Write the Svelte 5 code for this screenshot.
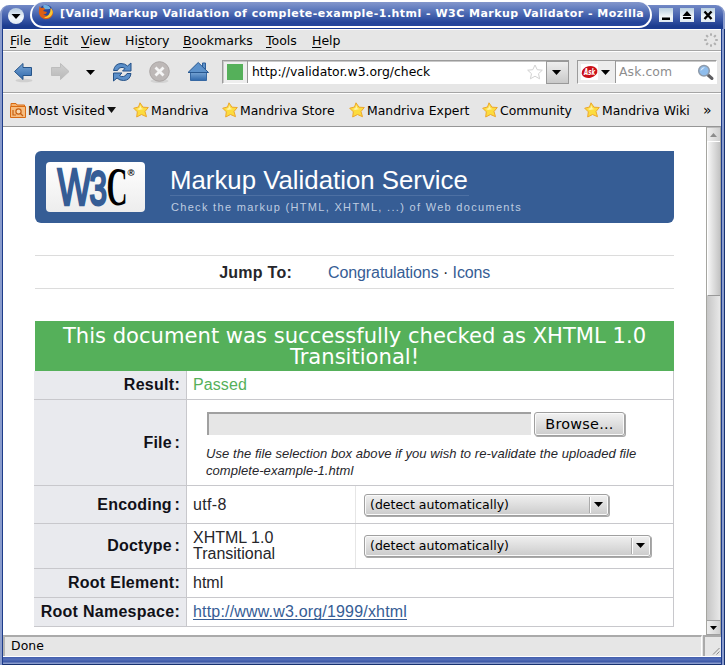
<script>
  const menus = [
    { a: '', k: 'F', b: 'ile', w: 34 },
    { a: '', k: 'E', b: 'dit', w: 37 },
    { a: '', k: 'V', b: 'iew', w: 44 },
    { a: 'Hi', k: 's', b: 'tory', w: 58 },
    { a: '', k: 'B', b: 'ookmarks', w: 83 },
    { a: '', k: 'T', b: 'ools', w: 46 },
    { a: '', k: 'H', b: 'elp', w: 40 }
  ];
  const bookmarks = [
    { t: 'Mandriva', w: 89 },
    { t: 'Mandriva Store', w: 127 },
    { t: 'Mandriva Expert', w: 133 },
    { t: 'Community', w: 102 },
    { t: 'Mandriva Wiki', w: 118 }
  ];
  const spokes = [0, 45, 90, 135, 180, 225, 270, 315];
</script>

{#snippet caret(w, h, fill)}
  <svg class="caret" width={w} height={h} viewBox="0 0 10 6" preserveAspectRatio="none"><path d="M0 0H10L5 6Z" fill={fill} /></svg>
{/snippet}

<div class="window">
  <header class="titlebar">
    <div class="frame"></div>
    <div class="orb"><svg width="16" height="16" viewBox="0 0 16 16"><path d="M3.500 6H12.500L8 11Z" /></svg></div>
    <div class="tab">
      <svg class="fox" width="16" height="16" viewBox="0 0 16 16">
        <circle cx="8" cy="7.600" r="6.800" fill="#27479c" />
        <path d="M5 1.500C9 .3 12 2 12.500 5C10 4.500 9 6 6 5Z" fill="#6fb0e0" />
        <path d="M1.500 2Q2 4 4 4Q6 3 7 5L5 7L9 8Q8 11 5 10Q8 13 11 11Q14 9 12 4Q17 8 14 12Q11 16 6 15Q1 13 .8 8Z" fill="#dd5f14" />
        <path d="M13 4Q16.500 8 13 12Q10 15 6 13.500Q12 12.500 13 4Z" fill="#f9c935" />
      </svg>
      <span>[Valid] Markup Validation of complete-example-1.html - W3C Markup Validator - Mozilla</span>
    </div>
    <div class="wbtns">
      <div class="wb"><svg width="14" height="14"><path d="M3 9.500H11V12H3Z" /></svg></div>
      <div class="wb"><svg width="14" height="14"><path d="M7 3L11.500 8H2.500ZM3 9H11V11H3Z" /></svg></div>
      <div class="wb"><svg width="14" height="14"><path d="M3.500 3.500L10.500 11M10.500 3.500L3.500 11" stroke="#000" stroke-width="2.400" /></svg></div>
    </div>
  </header>

  <div class="body">
    <nav class="menubar">
      {#each menus as m}<span style="width:{m.w}px">{m.a}<u>{m.k}</u>{m.b}</span>{/each}
      <svg class="throbber" width="14" height="14" viewBox="-7 -7 14 14">
        {#each spokes as s}<rect x="-1" y="-6.800" width="2" height="2.600" rx=".5" fill="#b0b0b0" transform="rotate({s})" />{/each}
      </svg>
    </nav>

    <div class="toolbar">
      <svg class="tools" width="210" height="40" viewBox="0 0 210 40">
        <defs>
          <linearGradient id="bl" x1="0" y1="0" x2="0" y2="1"><stop offset="0" stop-color="#7aa7d6" /><stop offset="1" stop-color="#2f68ab" /></linearGradient>
          <linearGradient id="gr" x1="0" y1="0" x2="0" y2="1"><stop offset="0" stop-color="#cfcfcf" /><stop offset="1" stop-color="#b9b9b9" /></linearGradient>
        </defs>
        <ellipse cx="20" cy="28.500" rx="8.500" ry="1.800" fill="#cfcfcf" />
        <path d="M10.500 19.500L19 11.500V15.500H27.500V23.500H19V27.500Z" fill="url(#bl)" stroke="#265489" />
        <path d="M65 19.500L56.500 11.500V15.500H47.500V23.500H56.500V27.500Z" fill="url(#gr)" stroke="#bdbdbd" />
        <path d="M82 18H91L86.500 23Z" fill="#000" />
        <path d="M109.500 18.500Q111 11.500 117 11.500Q121 11.500 123.500 14L127 11V19H118.500L121 16.500Q119 15 117 15.500Q114.500 15.500 113.500 18.500Z" fill="#5b8fc9" stroke="#245187" />
        <path d="M127 21.500Q126 28.500 119.500 28.500Q115.500 28.500 113 26L109.500 29V21H118L115.500 23.500Q117 25 119.500 24.500Q121.500 24.500 123 21.500Z" fill="#5b8fc9" stroke="#245187" />
        <ellipse cx="155.500" cy="29" rx="9" ry="2" fill="#d3d3d3" />
        <circle cx="155.500" cy="19.500" r="9.800" fill="#bdb8b7" stroke="#aaa5a4" />
        <path d="M151.500 15.500L159.500 23.500M159.500 15.500L151.500 23.500" stroke="#f5f5f5" stroke-width="2.800" />
        <path d="M186.500 20V28.500H202.500V20" fill="url(#bl)" stroke="#3668a3" />
        <path d="M198.500 11H201.500V17H198.500Z" fill="#5f92c8" stroke="#2d5f9b" />
        <path d="M184 20.500L194.200 10.500L204.500 20.500Z" fill="#5d92cb" stroke="#285890" />
      </svg>
      <div class="url">
        <div class="site"><i></i></div>
        <span class="addr">http://validator.w3.org/check</span>
        <svg class="fav" width="16" height="16" viewBox="0 0 16 16"><path d="M8 1L10.200 5.700L15.300 6.200L11.500 9.700L12.600 14.800L8 12.200L3.400 14.800L4.500 9.700L.7 6.200L5.800 5.700Z" fill="#fff" stroke="#d2d2d2" /></svg>
        <div class="drop">{@render caret(9, 5, '#000')}</div>
      </div>
      <div class="search">
        <div class="engine">
          <svg width="17" height="16" viewBox="0 0 17 16"><rect width="17" height="16" fill="#fff" /><ellipse cx="8.500" cy="8" rx="8" ry="5.800" fill="#cb1019" transform="rotate(-12 8.500 8)" /><text x="3" y="11" font-family="DejaVu Sans" font-size="8" font-weight="bold" font-style="italic" textLength="11" lengthAdjust="spacingAndGlyphs" fill="#fff">Ask</text></svg>
          {@render caret(9, 5, '#000')}
        </div>
        <span class="ph">Ask.com</span>
        <svg class="mag" width="17" height="17" viewBox="0 0 17 17"><path d="M11 11L15 14.500" stroke="#5e5e62" stroke-width="3" stroke-linecap="round" /><circle cx="7" cy="6.700" r="5.300" fill="#8fbdec" stroke="#8d9aaa" stroke-width="1.500" /><path d="M3.500 7Q4 3.500 8 3.200Q6 5 3.500 7" fill="#dbebfb" /></svg>
      </div>
    </div>

    <div class="bookmarks">
      <div class="bm first">
        <svg width="16" height="16" viewBox="0 0 16 16"><path d="M1 4V1.500H6L7 3H14.500V5" fill="#f5b26d" stroke="#d96a12" /><path d="M.500 4.500H15.500V15.500H.500Z" fill="#f6bd80" stroke="#d96a12" /><circle cx="8.500" cy="9.500" r="2.600" fill="#f9d8b0" stroke="#c75f10" stroke-width="1.200" /><path d="M10.500 11.500L13 14M3 8V13H6" fill="none" stroke="#c75f10" stroke-width="1.200" /></svg>
        <span>Most Visited</span>{@render caret(9, 6, '#111')}
      </div>
      {#each bookmarks as b}
        <div class="bm" style="width:{b.w}px">
          <svg width="16" height="16" viewBox="0 0 16 16"><path d="M7 .8L10 5.200L15.300 5.500L12 9.500L13.500 14.700L8.500 12.500L3.700 15L4.300 9.800L.7 6.200L5.500 5Z" fill="#fcdc3e" stroke="#eda72c" stroke-linejoin="round" /><path d="M7 3L8.700 6.500L11 7L6 8L4 7L6.500 6Z" fill="#fff3a5" /></svg>
          <span>{b.t}</span>
        </div>
      {/each}
      <span class="more">»</span>
    </div>

    <div class="viewport">
      <main>
        <div class="banner">
          <div class="logo">
            <svg width="99" height="50" viewBox="0 0 99 50">
              <g font-family="Liberation Sans">
                <text transform="translate(11.500 43) scale(.7 1)" font-size="51" fill="#365d95" stroke="#365d95" stroke-width="2.400">W</text>
                <text transform="translate(43.500 42.500) scale(.64 1)" font-size="49" fill="#365d95" stroke="#365d95" stroke-width="2.800">3</text>
                <text transform="translate(60.500 43) scale(.54 1)" font-family="Liberation Serif" font-size="54" font-weight="bold" fill="#000">C</text>
                <text x="81.500" y="14" font-size="9.500" font-weight="bold">®</text>
              </g>
            </svg>
          </div>
          <div class="heads"><h1>Markup Validation Service</h1><p>Check the markup (HTML, XHTML, ...) of Web documents</p></div>
        </div>

        <div class="jump"><strong>Jump To:</strong><span><a>Congratulations</a> <b>·</b> <a>Icons</a></span></div>

        <h2>This document was successfully checked as XHTML 1.0<br />Transitional!</h2>
        <div class="grid">
          <div class="row" style="height:29px"><div class="th">Result:</div><div class="td pass">Passed</div></div>
          <div class="row" style="height:86px">
            <div class="th spaced">File :</div>
            <div class="filecell">
              <div class="pick"><div class="input"></div><div class="browse">Browse...</div></div>
              <em>Use the file selection box above if you wish to re-validate the uploaded file<br />complete-example-1.html</em>
            </div>
          </div>
          <div class="row" style="height:38px">
            <div class="th spaced">Encoding :</div><div class="td half utf">utf-8</div>
            <div class="select" style="width:245px"><span>(detect automatically)</span><div>{@render caret(9, 5, '#000')}</div></div>
          </div>
          <div class="row" style="height:45px">
            <div class="th spaced">Doctype :</div><div class="td half">XHTML 1.0<br />Transitional</div>
            <div class="select" style="width:287px"><span>(detect automatically)</span><div>{@render caret(9, 5, '#000')}</div></div>
          </div>
          <div class="row" style="height:29px"><div class="th">Root Element:</div><div class="td">html</div></div>
          <div class="row" style="height:29px"><div class="th">Root Namespace:</div><div class="td"><a class="ns">http://www.w3.org/1999/xhtml</a></div></div>
        </div>
      </main>
      <aside class="scroll">
        <div class="sb up"><svg width="7" height="4"><path d="M3.500 0L7 4H0Z" fill="#8c8c8c" /></svg></div>
        <div class="thumb"></div>
        <div class="trough"></div>
        <div class="sb down">{@render caret(7, 4, '#000')}</div>
      </aside>
    </div>

    <footer>
      <div class="status">Done</div>
      <div class="grip"><svg width="7" height="7"><path d="M0 6.500L6.500 0M3.500 6.500L6.500 3.500" stroke="#888" /></svg></div>
    </footer>
  </div>
</div>

<style>
  * { box-sizing: border-box; }
  :global(body) { margin: 0; background: #fff; }
  .window {
    width: 725px; height: 665px; overflow: hidden; display: flex; flex-direction: column;
    font: 12.4px/16px "DejaVu Sans", sans-serif; color: #000;
  }
  .window div, .window span, h1, h2, p { white-space: nowrap; }
  svg { display: block; flex: none; overflow: visible; }

  .titlebar { position: relative; height: 29px; flex: none; display: flex; padding-left: 8px; }
  .frame {
    position: absolute; left: 0; right: 0; top: 5px; bottom: 0; border-radius: 9px 9px 0 0;
    background: linear-gradient(#7289c6, #3d5aa9 55%, #1c3c8f 88%); border-left: 2px solid #8a9ccd; border-right: 2px solid #8a9ccd;
  }
  .orb {
    position: relative; width: 16px; height: 16px; margin-top: 8px; border-radius: 8px;
    background: linear-gradient(#b5c9df, #f4f8fc 60%, #dfe9f2);
  }
  .tab {
    position: relative; margin-left: 6px; width: 622px; height: 26px; margin-top: 2px;
    border: 2px solid #fff; border-top-width: 0; border-radius: 13px;
    background: linear-gradient(#8497cc, #6680c1 25%, #24459a 85%); display: flex; align-items: flex-start; padding: 3px 0 0 6px;
    color: #fff; font-weight: bold; font-size: 11px; letter-spacing: .475px;
  }
  .tab span { margin-left: 6px; padding-top: 1px; }
  .fox { margin-top: -1px; }
  .wbtns { position: relative; display: flex; gap: 7px; margin: 8px 0 0 7px; }
  .wb { width: 14px; height: 14px; background: linear-gradient(#b9cfe0, #f1f6f9 60%, #dfe9f1); }

  .body {
    flex: 1; display: flex; flex-direction: column; background: #e6e6e6;
    border-style: solid; border-width: 0 4px 8px 3px; position: relative;
    border-image: linear-gradient(90deg, #8a9ccd 2px, #1d3c8a 2px, #1d3c8a 3px, #4763b0 3px, #4763b0 721px, #1d3c8a 721px, #1d3c8a 722px, #8a9ccd 722px, #8a9ccd 724px, #17316f 724px) 0 4 8 3;
  }
  .body::after { content: ""; position: absolute; left: 0; right: 0; bottom: -8px; height: 8px; background: linear-gradient(#4661b0 0 1px, #5872ba 2px, #3a56a5 5px, #8a9ccd 6px 7px, #17316f 7px); }
  .menubar { height: 22px; display: flex; padding: 3px 0 0 7px; border-top: 1px solid #fff; border-bottom: 1px solid #a5a5a5; font-size: 12.5px; }
  .menubar span { flex: none; }
  u { text-underline-offset: 2px; }
  .throbber { margin: 0 3px 0 auto; }
  .toolbar { height: 42px; display: flex; border-top: 1px solid #fff; border-bottom: 1px solid #a5a5a5; padding-left: 1px; }
  .url { display: flex; width: 347px; height: 24px; margin: 8px 0 0 8px; border: 1px solid #9b9b9b; border-right: 0; border-bottom-color: #fff; background: #fff; align-items: center; box-shadow: inset 1px 1px #c8c8c8; }
  .site { width: 25px; height: 22px; border-right: 1px solid #999; padding: 3px 0 0 4px; background: #eee; box-shadow: inset 1px 1px #c8c8c8; }
  .site i { display: block; width: 16px; height: 16px; background: #55b05a; }
  .addr { margin-left: 4px; }
  .fav { margin-left: auto; margin-right: 3px; }
  .drop { width: 23px; height: 23px; border: 1px solid #999; background: linear-gradient(#eee, #c9c9c9); display: flex; align-items: center; justify-content: center; padding-right: 3px; }
  .search { display: flex; align-items: center; width: 140px; height: 24px; margin: 8px 0 0 8px; border: 1px solid #9b9b9b; border-right-color: #fff; border-bottom-color: #fff; background: #fff; box-shadow: inset 1px 1px #c8c8c8; }
  .engine { width: 38px; height: 22px; display: flex; align-items: center; gap: 3px; padding-left: 3px; border-right: 1px solid #999; background: #ededed; }
  .ph { margin: 0 auto 0 3px; color: #8d8d8d; letter-spacing: .1px; }
  .mag { margin-right: 2px; }
  .bookmarks { height: 34px; display: flex; align-items: center; border-top: 1px solid #fff; border-bottom: 1px solid #969696; padding: 1px 0 0 7px; }
  .bm { display: flex; align-items: center; gap: 2px; flex: none; }
  .bm svg { margin-top: -1px; }
  .bm span { letter-spacing: .03px; }
  .bm.first { width: 123px; }
  .bm.first span { letter-spacing: .15px; }
  .more { margin-left: 1px; padding-bottom: 2px; font-size: 14px; }

  .viewport { height: 508px; display: flex; }
  main { flex: 1; background: #fff; padding: 24px 32px 0 31px; margin-left: 1px; box-shadow: -1px 0 #fff; font-family: "Liberation Sans", Arial, sans-serif; color: #26262b; font-size: 16px; }
  .banner { width: 639px; height: 72px; background: #365d95; border-radius: 6px 0 6px 6px; display: flex; padding: 11px; }
  .logo { width: 99px; height: 50px; border-radius: 4px; background: linear-gradient(#fff, #ededed); }
  .heads { margin-left: 25px; color: #fff; }
  h1 { font-size: 25.8px; line-height: 30px; font-weight: normal; margin: 3px 0 0; border-bottom: 1px solid #4d70a3; width: 299px; height: 31px; }
  p { margin: 4px 0 0 1px; font-size: 11px; line-height: 14px; letter-spacing: 1.31px; color: #bfcce0; }
  .jump { margin-top: 32px; width: 639px; height: 34px; border-top: 1px solid #dcdcdc; border-bottom: 1px solid #dcdcdc; display: flex; align-items: center; padding-top: 1px; }
  .jump strong { width: 257px; text-align: right; letter-spacing: .25px; }
  .jump span { margin-left: 36px; letter-spacing: -.1px; }
  .jump b { font-weight: normal; }
  a { color: #365d95; }
  h2 { width: 639px; height: 50px; margin: 32px 0 0; padding-top: 4px; background: #55b05a; color: #fff; text-align: center; font: 21.1px/21px "DejaVu Sans", sans-serif; }
  .grid { width: 640px; margin-left: -1px; border-right: 1px solid #c8c8cc; }
  .row { display: flex; border-bottom: 1px solid #c8c8cc; }
  .th { width: 153px; background: #e9eaee; border-right: 1px solid #c8c8cc; padding: 0 6px 1px 0; display: flex; align-items: center; justify-content: flex-end; font-weight: bold; letter-spacing: .28px; color: #111118; }
  .spaced { word-spacing: -2px; padding-bottom: 0; letter-spacing: .2px; }
  .td { display: flex; align-items: center; padding: 0 0 1px 6px; }
  .pass { color: #55b05a; letter-spacing: .1px; }
  .half { width: 169px; border-right: 1px solid #e6e6e6; margin-right: 8px; }
  .utf { letter-spacing: .35px; padding-bottom: 0; }
  .ns { line-height: 18px; border-bottom: 1px solid #365d95; letter-spacing: .18px; height: 17px; }
  .filecell { padding: 12px 0 0 19px; }
  .pick { display: flex; gap: 3px; margin-left: 1px; height: 33px; }
  .input { width: 324px; height: 23px; background: #e6e6e6; border: solid #a0a0a0; border-width: 2px 0 0 2px; }
  .browse { width: 91px; height: 24px; border: 1px solid #a0a0a0; border-radius: 3px; background: linear-gradient(#f2f2f2, #ccc); box-shadow: inset 0 0 0 1px #fafafa, 1px 1px #aaa; font: 14.4px/22px "DejaVu Sans", sans-serif; letter-spacing: .25px; text-align: center; color: #000; }
  em { display: block; font-size: 13px; line-height: 17px; letter-spacing: .06px; }
  .select { display: flex; align-self: center; height: 22px; border: 1px solid #a0a0a0; border-radius: 3px; background: linear-gradient(#f0f0f0, #cbcbcb); box-shadow: inset 0 0 0 1px #fafafa, 1px 1px #aaa; font: 12.5px/20px "DejaVu Sans", sans-serif; color: #000; padding-left: 5px; }
  .select span { flex: 1; }
  .select div { width: 19px; margin: 2px 0; border-left: 1px solid #aaa; box-shadow: inset 1px 0 #fff; padding: 5px 0 0 4px; }

  .scroll { width: 15px; border-left: 1px solid #a5a5a0; border-right: 1px solid #a5a5a0; display: flex; flex-direction: column; background: linear-gradient(90deg, #c6c6c6, #e8e8e8); }
  .sb { height: 15px; display: flex; align-items: center; justify-content: center; background: linear-gradient(90deg, #f0f0f0, #d0d0d0); }
  .up { border-top: 1px solid #bbb; border-bottom: 1px solid #fff; }
  .thumb { height: 154px; background: linear-gradient(90deg, #f5f5f5, #c3c3c3); border-bottom: 1px solid #999; border-left: 1px solid #fff; }
  .trough { flex: 1; }
  .down { border-top: 1px solid #a0a0a0; border-bottom: 1px solid #a0a0a0; }
  footer { height: 22px; display: flex; gap: 1px; border-bottom: 1px solid #fff; flex: none; background: #e6e6e6; }
  .status { flex: 1; border-top: 2px solid #aaa; border-left: 2px solid #b5b5b5; border-right: 1px solid #fff; padding: 1px 0 0 6px; letter-spacing: .1px; }
  .grip { width: 18px; border-top: 2px solid #aaa; border-left: 2px solid #aaa; display: flex; align-items: flex-end; justify-content: flex-end; padding: 0 1px 1px 0; }
</style>
